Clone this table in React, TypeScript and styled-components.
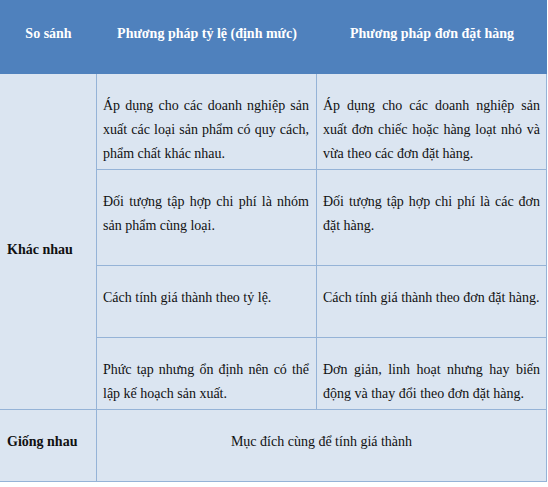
import { Fragment } from 'react';
import styled, { createGlobalStyle } from 'styled-components';

const GlobalStyle = createGlobalStyle`
  html, body {
    margin: 0;
    padding: 0;
    background: #ffffff;
  }
`;

const Table = styled.div`
  display: grid;
  width: 547px;
  grid-template-columns: 97px 220px 230px;
  grid-template-rows: 74px 96px 96px 72px 72px 72px;
  font-family: 'Liberation Serif', 'DejaVu Serif', serif;
  font-size: 14px;
  line-height: 24px;
  color: #111;
`;

const HeadCell = styled.div`
  background: #4f81bd;
  color: #ffffff;
  font-weight: bold;
  text-align: center;
  padding: 22px 6px 0;
`;

const Cell = styled.div<{ $last?: boolean }>`
  box-sizing: border-box;
  background: #dbe5f1;
  border-bottom: 1px solid #95b3d7;
  border-right: 1px solid #95b3d7;
  padding: 20px ${(p) => (p.$last ? 6 : 7)}px 0 6px;
  text-align: justify;
`;

const LabelCell = styled(Cell)<{ $rows?: number }>`
  grid-row: span ${(p) => p.$rows ?? 1};
  font-weight: bold;
  text-align: left;
  padding-left: 7px;
  ${(p) =>
    p.$rows && p.$rows > 1
      ? `
    display: flex;
    align-items: center;
    padding-top: 16px;
  `
      : ''}
`;

const WideCell = styled(Cell)`
  grid-column: span 2;
  text-align: center;
`;

const rows = [
  [
    'Áp dụng cho các doanh nghiệp sản xuất các loại sản phẩm có quy cách, phẩm chất khác nhau.',
    'Áp dụng cho các doanh nghiệp sản xuất đơn chiếc hoặc hàng loạt nhỏ và vừa theo các đơn đặt hàng.',
  ],
  [
    'Đối tượng tập hợp chi phí là nhóm sản phẩm cùng loại.',
    'Đối tượng tập hợp chi phí là các đơn đặt hàng.',
  ],
  ['Cách tính giá thành theo tỷ lệ.', 'Cách tính giá thành theo đơn đặt hàng.'],
  [
    'Phức tạp nhưng ổn định nên có thể lập kế hoạch sản xuất.',
    'Đơn giản, linh hoạt nhưng hay biến động và thay đổi theo đơn đặt hàng.',
  ],
];

export default function App() {
  return (
    <>
      <GlobalStyle />
      <Table>
        <HeadCell>So sánh</HeadCell>
        <HeadCell>Phương pháp tỷ lệ (định mức)</HeadCell>
        <HeadCell>Phương pháp đơn đặt hàng</HeadCell>

        <LabelCell $rows={4}>Khác nhau</LabelCell>
        {rows.map(([a, b], i) => (
          <Fragment key={i}>
            <Cell>{a}</Cell>
            <Cell $last>{b}</Cell>
          </Fragment>
        ))}

        <LabelCell>Giống nhau</LabelCell>
        <WideCell $last>Mục đích cùng để tính giá thành</WideCell>
      </Table>
    </>
  );
}
